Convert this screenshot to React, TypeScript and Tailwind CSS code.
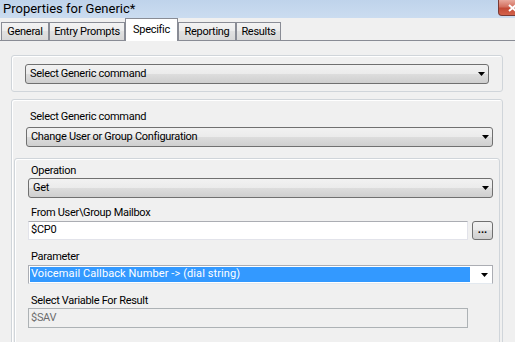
import React from "react";

const Arrow = () => (
  <svg width="7" height="4" viewBox="0 0 7 4" className="shrink-0">
    <polygon points="0,0 7,0 3.5,4" fill="#000" />
  </svg>
);

const Combo = ({ text }: { text: string }) => (
  <div className="flex h-[20px] items-center rounded-[3px] border border-[#707070] bg-[linear-gradient(#f2f2f2,#ebebeb_50%,#dddddd_50%,#cfcfcf)] pl-[4px] pr-[3px] text-black">
    <span className="flex-1 truncate">{text}</span>
    <Arrow />
  </div>
);

const Label = ({ text, className = "" }: { text: string; className?: string }) => (
  <div className={`h-[15px] pl-[3px] leading-[15px] text-black ${className}`}>{text}</div>
);

const tabs = ["General", "Entry Prompts", "Specific", "Reporting", "Results"];
const tabW: Record<string, string> = {
  General: "w-[48px]",
  "Entry Prompts": "w-[76px]",
  Specific: "w-[53px]",
  Reporting: "w-[58px]",
  Results: "w-[45px]",
};

export default function App() {
  return (
    <div className="relative h-[342px] w-[515px] overflow-hidden bg-[#f0f0f0] text-[11px] tracking-[-0.3px] [font-family:Roboto,sans-serif]">
      {/* title bar */}
      <div className="flex h-[18px] items-start bg-[linear-gradient(to_bottom,#bfd3eb,#cbdcf0)]">
        <span className="pl-[3px] pt-[1px] text-[13px] leading-[15px] tracking-normal text-black">Properties for Generic*</span>
        <div className="ml-auto mr-[-12px] flex h-[16px] w-[29px] items-center justify-center rounded-b-[4px] border border-t-0 border-[#7a3a34] bg-[linear-gradient(#e8a89c,#d3705f_45%,#c34a36_55%,#d4634c)]">
          <svg width="9" height="8" viewBox="0 0 9 8">
            <path d="M1 1 L8 7 M8 1 L1 7" stroke="#fff" strokeWidth="2" />
          </svg>
        </div>
      </div>

      {/* tab strip */}
      <div className="flex h-[23px] items-end border-b border-[#898c95] pl-[1px]">
        {tabs.map((t) =>
          t === "Specific" ? (
            <div
              key={t}
              className={`relative z-10 -mb-[1px] flex h-[23px] items-start justify-center border border-b-0 border-[#898c95] bg-white pt-[4px] leading-[13px] text-black ${tabW[t]}`}
            >
              {t}
            </div>
          ) : (
            <div
              key={t}
              className={`flex h-[18px] items-center justify-center border border-b-0 border-[#898c95] bg-[linear-gradient(#f3f3f3,#ebebeb_50%,#e1e1e1_50%,#d8d8d8)] leading-[13px] text-black ${tabW[t]}`}
            >
              {t}
            </div>
          )
        )}
      </div>

      {/* content */}
      <div className="flex flex-col pl-[11px] pr-[12px] pt-[14px]">
        <div className="rounded-[3px] border border-[#d0d5da] px-[13px] pb-[7px] pt-[8px] shadow-[inset_1px_1px_0_#fff]">
          <Combo text="Select Generic command" />
        </div>

        <div className="mt-[7px] rounded-[3px] border border-[#d0d5da] pb-[40px] pt-[9px] shadow-[inset_1px_1px_0_#fff]">
          <div className="pl-[14px] pr-[9px]">
            <Label text="Select Generic command" className="pl-[4px]" />
            <div className="mt-[3px]">
              <Combo text="Change User or Group Configuration" />
            </div>
          </div>

          <div className="mx-[2px] mt-[11px] rounded-[3px] border border-[#d0d5da] pb-[30px] pl-[13px] pr-[6px] pt-[4px] shadow-[inset_1px_1px_0_#fff]">
            <Label text="Operation" />
            <Combo text="Get" />

            <Label text="From User\Group Mailbox" className="mt-[7px]" />
            <div className="mt-[1px] flex items-center gap-[4px]">
              <div className="flex h-[19px] flex-1 items-center border border-[#e2e3ea] border-t-[#abadb3] bg-white pl-[2px] text-black">
                $CP0
              </div>
              <div className="flex h-[19px] w-[21px] items-center justify-center rounded-[3px] border border-[#707070] bg-[linear-gradient(#f2f2f2,#ebebeb_50%,#dddddd_50%,#cfcfcf)] pb-[3px] text-[11px] font-bold leading-none tracking-normal text-black">
                ...
              </div>
            </div>

            <Label text="Parameter" className="mt-[9px]" />
            <div className="mt-[1px] flex h-[19px] items-center border border-[#abadb3] border-b-[#e3e9ef] bg-white p-[1px] pr-[4px]">
              <div className="flex h-full flex-1 items-center bg-[#3399ff] pl-[1px] tracking-[0.1px] text-white">
                Voicemail Callback Number -&gt; (dial string)
              </div>
              <div className="flex w-[18px] justify-end">
                <Arrow />
              </div>
            </div>

            <Label text="Select Variable For Result" className="mt-[9px]" />
            <div className="flex gap-[4px]">
              <div className="flex h-[20px] flex-1 items-center border border-[#adb2b5] bg-[#f0f0f0] pl-[2px] text-[#6d6d6d]">
                $SAV
              </div>
              <div className="w-[21px]" />
            </div>
          </div>
        </div>
      </div>
    </div>
  );
}
